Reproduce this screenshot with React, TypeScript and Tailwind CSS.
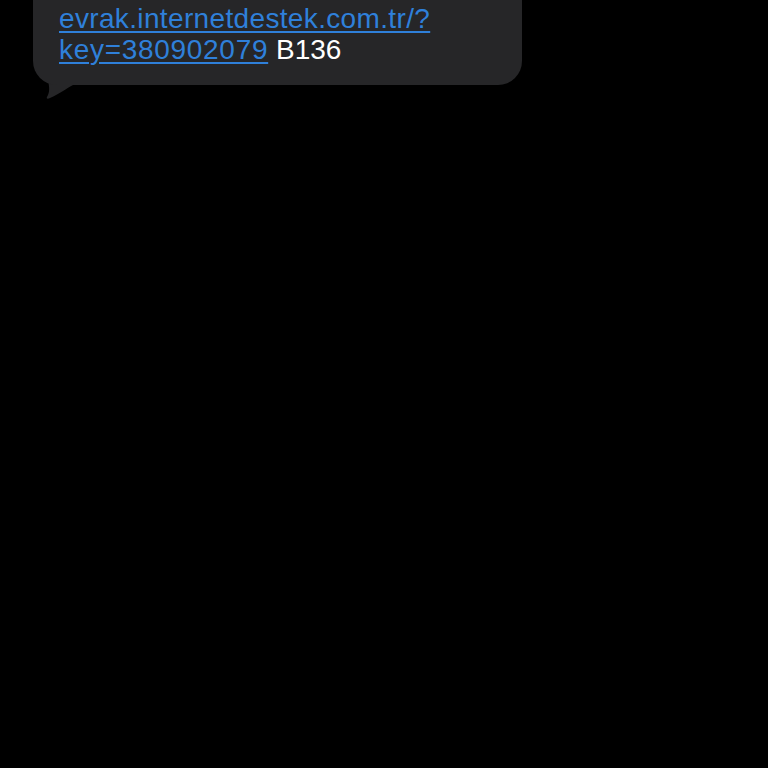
export default function App() {
  return (
    <div className="min-h-[768px] w-[768px] bg-black" style={{ fontFamily: '"Liberation Sans", Arial, sans-serif' }}>
      <div className="pl-[33px] pt-0">
        <div className="relative w-[489px]">
          <div className="relative z-10 rounded-b-[24px] bg-[#262628] pl-[26px] pr-4 pt-[3px] pb-[20px] text-[28px] leading-[31px] text-white">
            <a className="tracking-[0.35px] text-[#2f80da] underline decoration-2 underline-offset-[3px]">evrak.internetdestek.com.tr/?</a>
            <br />
            <a className="tracking-[0.7px] text-[#2f80da] underline decoration-2 underline-offset-[3px]">key=380902079</a>{" "}
            <span>B136</span>
          </div>
          <svg className="absolute left-[8px] top-[62px]" width="50" height="38" viewBox="0 0 50 38">
            <path d="M4 0 C4 14 12 26 6 35 C5 37 7 37 9 36 C18 32 26 26 32 23 L40 20 L40 0 Z" fill="#262628" />
          </svg>
        </div>
      </div>
    </div>
  );
}
